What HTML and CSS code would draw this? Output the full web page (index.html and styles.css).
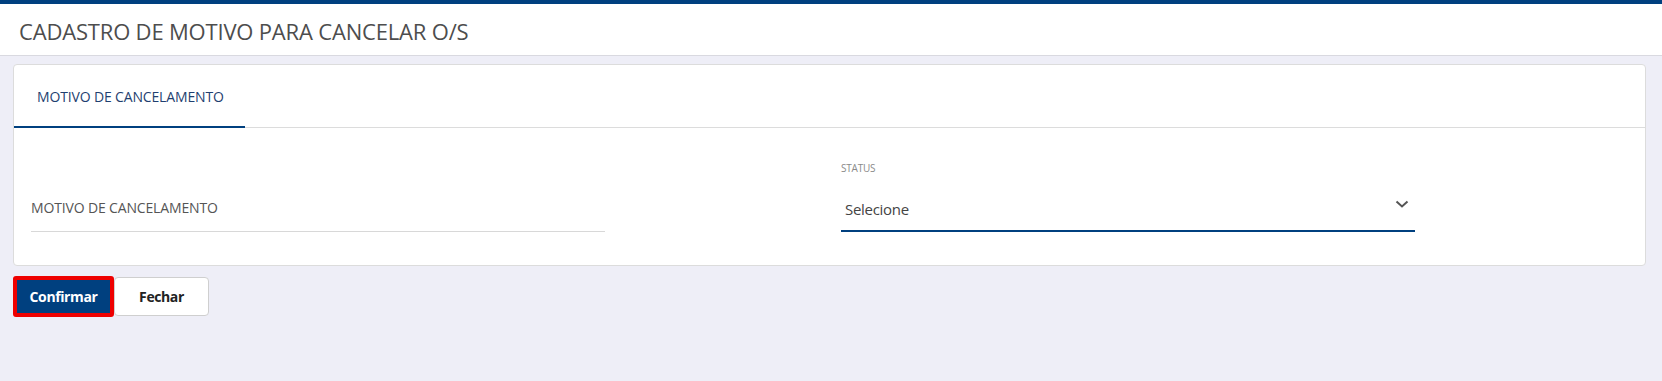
FILE: index.html
```html
<!DOCTYPE html>
<html lang="pt-BR">
<head>
<meta charset="utf-8">
<title>Cadastro de Motivo para Cancelar O/S</title>
<link rel="stylesheet" href="styles.css">
</head>
<body>
<div class="topbar"></div>
<header class="page-header">
  <h1 class="page-title">CADASTRO DE MOTIVO PARA CANCELAR O/S</h1>
</header>
<main class="content">
  <section class="card">
    <nav class="tabs">
      <div class="tab tab-active">MOTIVO DE CANCELAMENTO</div>
    </nav>
    <div class="card-body">
      <div class="field">
        <div class="field-label-small"></div>
        <div class="text-input">MOTIVO DE CANCELAMENTO</div>
      </div>
      <div class="field">
        <div class="field-label-small">STATUS</div>
        <div class="select">
          <span class="select-value">Selecione</span>
          <svg class="chevron" width="14" height="8" viewBox="0 0 14 8"><path d="M1.5 1.5 L7 6.5 L12.5 1.5" fill="none" stroke="#555" stroke-width="2"/></svg>
        </div>
      </div>
    </div>
  </section>
  <div class="actions">
    <button class="btn btn-primary">Confirmar</button>
    <button class="btn btn-default">Fechar</button>
  </div>
</main>
</body>
</html>
```
FILE: styles.css
```css
* { box-sizing: border-box; }
html, body { margin: 0; padding: 0; }
body {
  background: #eeeef7;
  font-family: "Open Sans", "Noto Sans", sans-serif;
  height: 381px;
}
.topbar { height: 4px; background: #00407f; }
.page-header {
  height: 52px;
  background: #fff;
  border-bottom: 1px solid #d9d9e0;
  display: flex;
  align-items: center;
  padding-left: 19px;
}
.page-title {
  margin: 0;
  font-weight: 400;
  font-size: 22px;
  letter-spacing: -0.18px;
  color: #4d4d4d;
  padding-top: 2px;
}
.content { padding: 8px 16px 0 13px; }
.card {
  background: #fff;
  border: 1px solid #dcdcdc;
  border-radius: 4px;
}
.tabs {
  display: flex;
  border-bottom: 1px solid #dcdcdc;
  height: 63px;
}
.tab {
  width: 231px;
  padding-left: 23px;
  display: flex;
  align-items: center;
  font-size: 14px;
  letter-spacing: -0.15px;
  color: #1f3f70;
  border-bottom: 2px solid #00407f;
  margin-bottom: -1px;
  padding-top: 2px;
}
.card-body {
  display: grid;
  grid-template-columns: 574px 574px;
  column-gap: 236px;
  padding: 33px 17px 33px 17px;
}
.field { display: flex; flex-direction: column; }
.field-label-small {
  height: 14px;
  font-size: 10px;
  color: #8a8a8a;
  letter-spacing: -0.2px;
  line-height: 14px;
}
.text-input {
  margin-top: 19px;
  height: 38px;
  border-bottom: 1px solid #d8d8d8;
  font-size: 14px;
  letter-spacing: -0.15px;
  color: #555;
  padding-top: 4px;
}
.select {
  margin-top: 19px;
  height: 38px;
  border-bottom: 2px solid #00407f;
  display: flex;
  align-items: flex-start;
  justify-content: space-between;
  padding-left: 4px;
  padding-right: 6px;
}
.select-value { font-size: 15px; color: #444; letter-spacing: -0.3px; padding-top: 5px; }
.chevron { margin-top: 6px; }
.actions { display: flex; gap: 0; margin-top: 10px; }
.btn {
  font-family: "Open Sans", "Noto Sans", sans-serif;
  font-weight: 700;
  font-size: 14px;
  letter-spacing: -0.4px;
  height: 41px;
  border-radius: 4px;
  cursor: pointer;
}
.btn-primary {
  width: 101px;
  background: #00407f;
  color: #fff;
  border: 4px solid #ee0000;
  border-radius: 3px;
}
.btn-default {
  width: 95px;
  height: 39px;
  margin-top: 1px;
  background: #fff;
  color: #222;
  border: 1px solid #cfcfcf;
}
```
